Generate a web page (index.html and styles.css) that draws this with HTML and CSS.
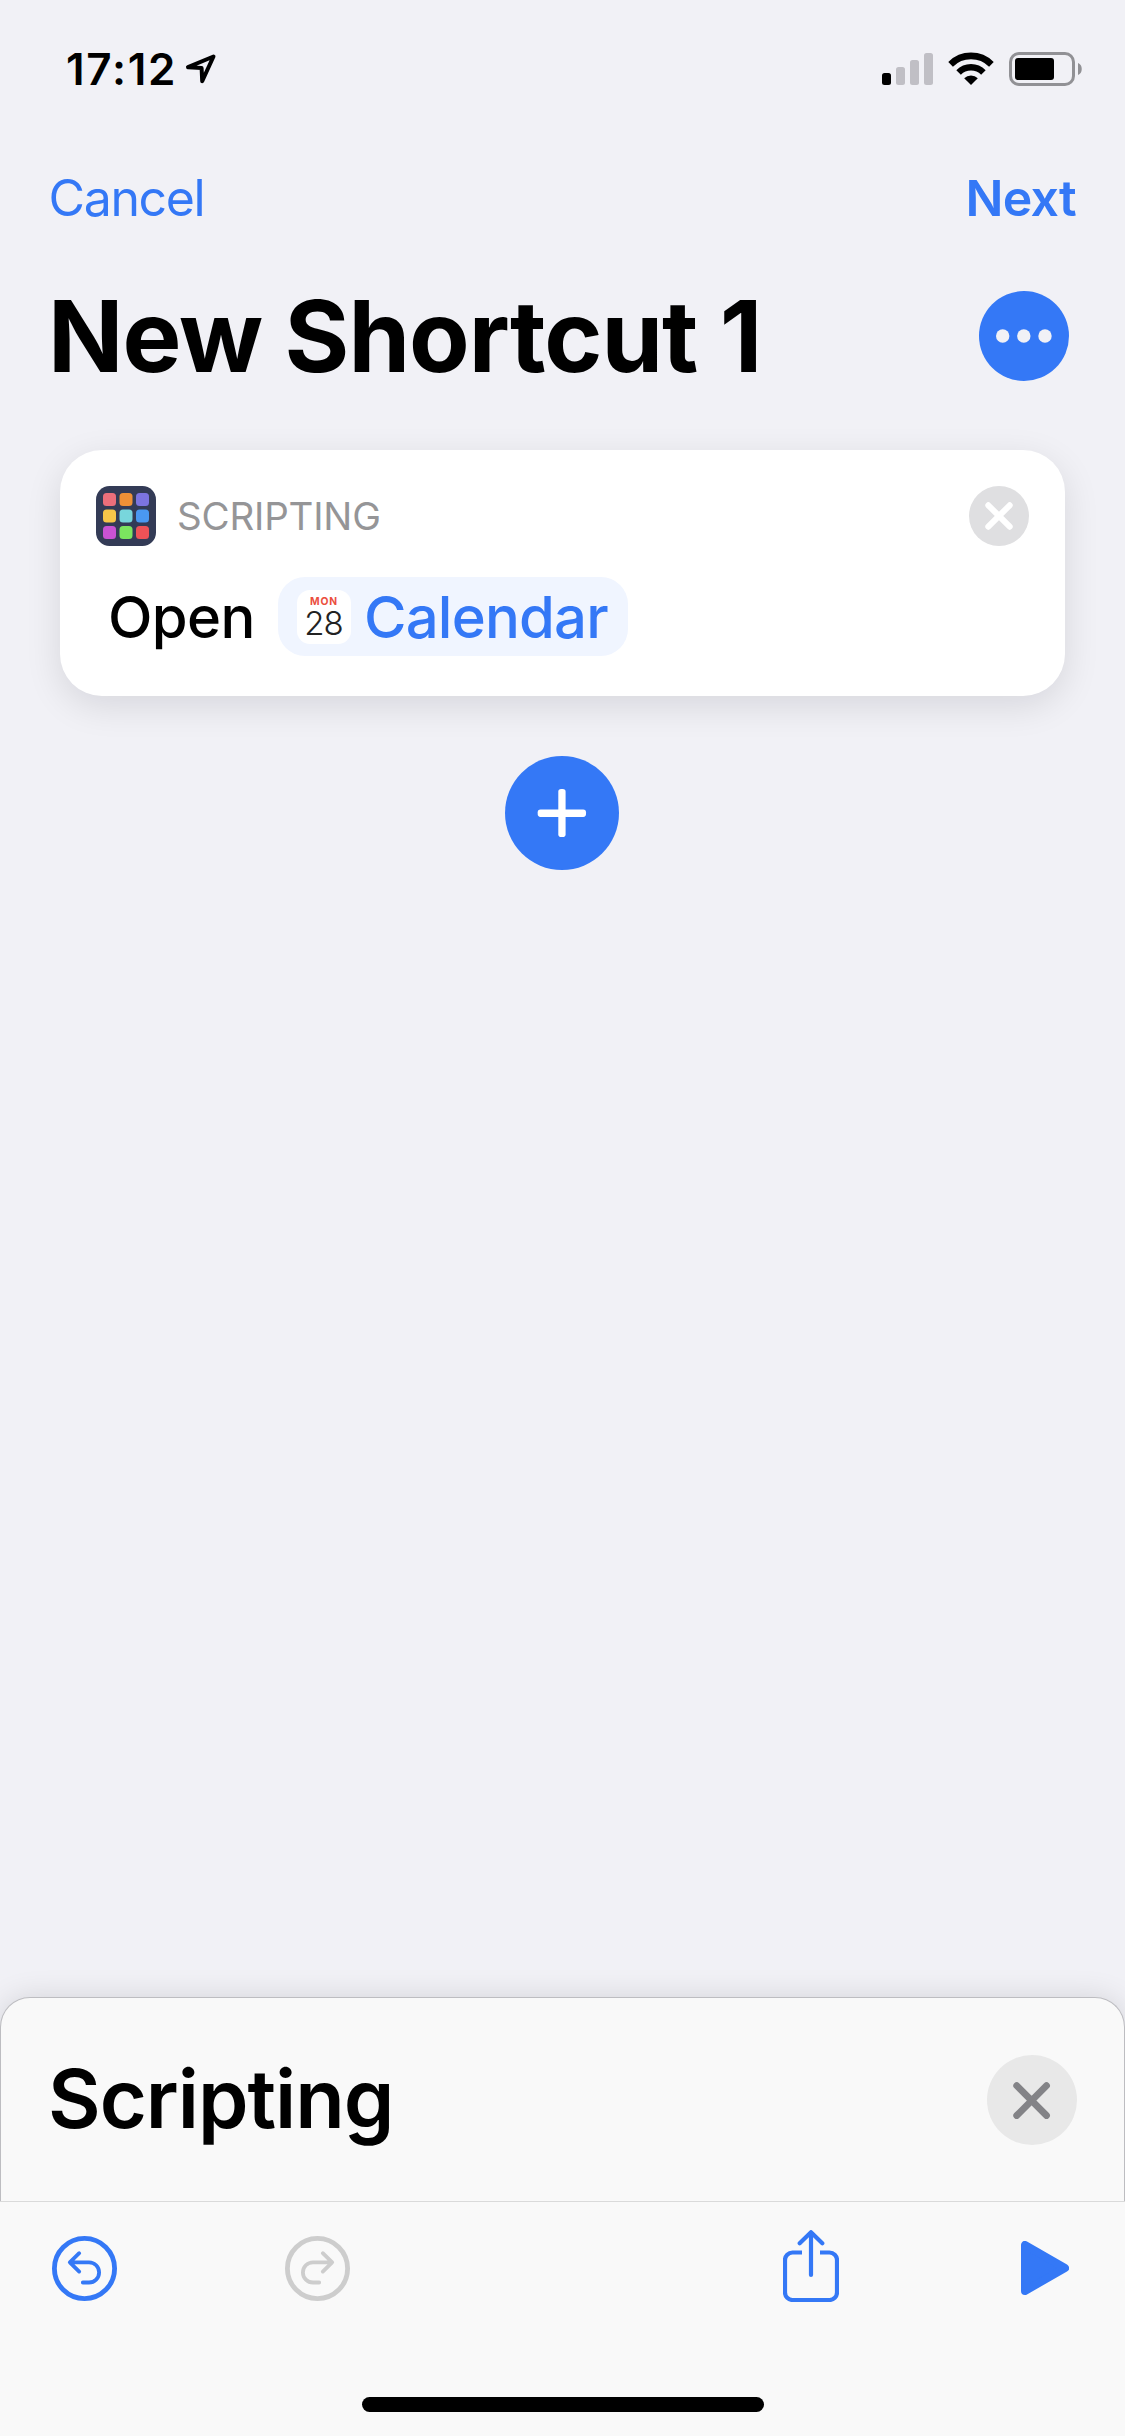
FILE: index.html
```
<!DOCTYPE html>
<html lang="en">
<head>
<meta charset="utf-8">
<title>New Shortcut 1</title>
<link rel="stylesheet" href="styles.css">
</head>
<body>
<div class="screen">
  <header class="status">
    <span class="time">17:12</span>
    <svg class="location" width="32" height="32" viewBox="0 0 32 32"><path d="M28.500 3.500 3 14.200l13.600.8.6 13.200z" fill="none" stroke="#000" stroke-width="4" stroke-linejoin="round"/></svg>
    <div class="indicators">
      <svg class="signal" width="51" height="34" viewBox="0 0 51 34">
        <rect x="0" y="21" width="9" height="12" rx="2.500"/>
        <g fill="#c0bfc5"><rect x="14" y="15" width="9" height="18" rx="2.500"/><rect x="28" y="8" width="9" height="25" rx="2.500"/><rect x="42" y="1" width="9" height="32" rx="2.500"/></g>
      </svg>
      <svg class="wifi" width="46" height="34" viewBox="0 0 46 34">
        <path d="M2.600 12.300a29 29 0 0 1 40.800 0" fill="none" stroke="#000" stroke-width="6.600"/>
        <path d="M10.600 20.400a17.500 17.500 0 0 1 24.800 0" fill="none" stroke="#000" stroke-width="6.400"/>
        <path d="M16.200 26.200a9.600 9.600 0 0 1 13.600 0L23 33z"/>
      </svg>
      <svg class="battery" width="74" height="34" viewBox="0 0 74 34">
        <rect x="1.500" y="1.500" width="63" height="31" rx="8.500" fill="none" stroke="#919195" stroke-width="3"/>
        <rect x="6" y="6" width="39" height="22" rx="3"/>
        <path d="M69 11c5 1.500 5 10.500 0 12z" fill="#919195"/>
      </svg>
    </div>
  </header>
  <nav class="nav"><span class="cancel">Cancel</span><span class="next">Next</span></nav>
  <div class="heading">
    <h1>New Shortcut 1</h1>
    <svg width="90" height="90" viewBox="0 0 90 90"><circle cx="45" cy="45" r="45" fill="#3478f6"/><g fill="#f1f1f6"><circle cx="23.700" cy="45" r="6.700"/><circle cx="44.800" cy="45" r="6.700"/><circle cx="66" cy="45" r="6.700"/></g></svg>
  </div>
  <main class="editor">
    <section class="card">
      <div class="card-head">
        <svg width="60" height="60" viewBox="0 0 60 60">
          <rect width="60" height="60" rx="13.500" fill="#333b56"/>
          <rect x="7" y="7" width="13" height="13" rx="3.500" fill="#ec6f7b"/><rect x="23.500" y="7" width="13" height="13" rx="3.500" fill="#ee9036"/><rect x="40" y="7" width="13" height="13" rx="3.500" fill="#7c74e0"/>
          <rect x="7" y="23.500" width="13" height="13" rx="3.500" fill="#f7c649"/><rect x="23.500" y="23.500" width="13" height="13" rx="3.500" fill="#78d6dc"/><rect x="40" y="23.500" width="13" height="13" rx="3.500" fill="#4a98f1"/>
          <rect x="7" y="40" width="13" height="13" rx="3.500" fill="#c952d3"/><rect x="23.500" y="40" width="13" height="13" rx="3.500" fill="#7be55f"/><rect x="40" y="40" width="13" height="13" rx="3.500" fill="#ee5257"/>
        </svg>
        <span class="category">SCRIPTING</span>
        <svg class="remove" width="60" height="60" viewBox="0 0 60 60"><circle cx="30" cy="30" r="30" fill="#dfdfe1"/><path d="m19.300 19.300 21.400 21.400m0-21.400L19.300 40.700" stroke="#fff" stroke-width="6" stroke-linecap="round"/></svg>
      </div>
      <div class="action">
        <span class="verb">Open</span>
        <span class="pill">
          <span class="cal-icon"><span class="cal-day">MON</span><span class="cal-date">28</span></span>
          <span class="app">Calendar</span>
        </span>
      </div>
    </section>
    <svg class="add" width="114" height="114" viewBox="0 0 114 114"><circle cx="57" cy="57" r="57" fill="#3478f6"/><g fill="#fff"><rect x="32.700" y="53.400" width="48.300" height="7.500" rx="2.800"/><rect x="53.300" y="33" width="7.300" height="48" rx="2.800"/></g></svg>
  </main>
  <section class="sheet">
    <h2>Scripting</h2>
    <svg width="90" height="90" viewBox="0 0 90 90"><circle cx="45" cy="45" r="45" fill="#e8e8e8"/><path d="m29.700 30.700 29.800 29.800m0-29.800L29.700 60.500" stroke="#838387" stroke-width="6.800" stroke-linecap="round"/></svg>
  </section>
  <footer class="toolbar">
    <div class="tools">
      <svg width="65" height="65" viewBox="0 0 65 65" fill="none" stroke="#3478f6" stroke-linecap="round" stroke-linejoin="round"><circle cx="32.500" cy="32.500" r="30.100" stroke-width="4.800"/><path d="M27.200 17.200 17.800 26.300l9.400 9.300M18.500 26.300H37a10.100 10.100 0 0 1 0 20.200h-6.200" stroke-width="3.800"/></svg>
      <svg class="redo" width="65" height="65" viewBox="0 0 65 65" fill="none" stroke="#cdcdcd" stroke-linecap="round" stroke-linejoin="round"><circle cx="32.500" cy="32.500" r="30.100" stroke-width="4.800"/><path d="M37.800 17.200 47.200 26.300l-9.400 9.300M46.500 26.300H28a10.100 10.100 0 0 0 0 20.200h6.200" stroke-width="3.800"/></svg>
      <svg class="share" width="56" height="72" viewBox="0 0 56 72" fill="none" stroke="#3478f6" stroke-width="4.200"><path d="M19 22.500H9.500A7.500 7.500 0 0 0 2 30v32.500A7.500 7.500 0 0 0 9.500 70h37a7.500 7.500 0 0 0 7.500-7.500V30a7.500 7.500 0 0 0-7.500-7.500H37"/><path d="M28 45V2.500M16.700 13.200 28 2.200l11.300 11" stroke-linecap="round" stroke-linejoin="round"/></svg>
      <svg class="play" width="48" height="54" viewBox="0 0 48 54"><path d="M4 4v46l40-23z" fill="#3478f6" stroke="#3478f6" stroke-width="8" stroke-linejoin="round"/></svg>
    </div>
    <div class="home"></div>
  </footer>
</div>
</body>
</html>
```
FILE: styles.css
```
* { box-sizing: border-box; }
body { margin: 0; background: #f1f1f6; color: #000; font-family: Inter, "Liberation Sans", sans-serif; }
svg { display: block; flex: none; }
h1, h2 { margin: 0; white-space: nowrap; }
.screen { width: 1125px; height: 2436px; display: flex; flex-direction: column; overflow: hidden; }

.status { height: 138px; padding: 0 42px 0 66px; display: flex; align-items: center; }
.time { font-size: 44px; font-weight: 600; letter-spacing: 1.75px; line-height: 60px; }
.location { margin-left: 8px; }
.indicators { margin-left: auto; display: flex; align-items: center; }
.wifi { margin-left: 15px; }
.battery { margin-left: 15px; }

.nav { height: 120px; padding: 0 49px 0 48.5px; display: flex; align-items: center; justify-content: space-between; font-size: 50px; line-height: 60px; color: #3478f6; }
.cancel { letter-spacing: -1.35px; }
.next { font-weight: 600; letter-spacing: -.7px; }

.heading { height: 156px; padding: 0 56px 0 48px; display: flex; align-items: center; justify-content: space-between; }
.heading h1 { font-size: 99px; font-weight: 700; line-height: 120px; letter-spacing: -1.02px; }

.editor { flex: 1; padding: 36px 60px 0; display: flex; flex-direction: column; align-items: center; }
.card { width: 1005px; height: 246px; padding: 36px; background: #fff; border-radius: 42px; box-shadow: 0 10px 36px rgba(0, 0, 20, .11); }
.card-head { display: flex; align-items: center; }
.category { margin-left: 21px; font-size: 38.5px; line-height: 48px; letter-spacing: -.2px; color: #959597; }
.remove { margin-left: auto; }
.action { margin: 31px 0 0 12px; display: flex; align-items: center; font-size: 58px; font-weight: 500; line-height: 70px; }
.verb { width: 170px; letter-spacing: -.65px; }
.pill { height: 79px; width: 350px; padding-left: 19px; display: flex; align-items: center; background: #f0f5ff; color: #3478f6; border-radius: 27px; }
.cal-icon { width: 54px; height: 54px; border-radius: 13px; background: #fff; display: flex; flex-direction: column; align-items: center; }
.cal-day { margin-top: 5px; font-size: 10.3px; line-height: 12px; font-weight: 700; letter-spacing: .8px; color: #eb4e3d; }
.cal-date { padding-right: 1px; font-size: 33px; line-height: 32px; font-weight: 300; letter-spacing: -.9px; color: #222; }
.app { margin-left: 13px; letter-spacing: -.8px; }
.add { margin: 60px 1px 0 0; }

.sheet { height: 204px; padding: 0 47px 0 47px; display: flex; align-items: center; justify-content: space-between; background: #f9f9f9; border: 1px solid #bdbdc1; border-bottom: 0; border-radius: 30px 30px 0 0; box-shadow: 0 0 30px rgba(0, 0, 20, .12); }
.sheet h2 { margin-top: -2px; font-size: 81px; font-weight: 600; line-height: 98px; letter-spacing: -1.03px; }
.toolbar { height: 235px; background: #f9f9f9; border-top: 1px solid #dadada; display: flex; flex-direction: column; align-items: center; }
.tools { align-self: stretch; height: 132px; padding: 0 56px 0 52px; display: flex; align-items: center; }
.redo { margin-left: 168px; }
.share { margin: -4px 0 0 433px; }
.play { margin-left: auto; }
.home { margin-top: 63px; width: 402px; height: 15px; border-radius: 8px; background: #000; }
```
